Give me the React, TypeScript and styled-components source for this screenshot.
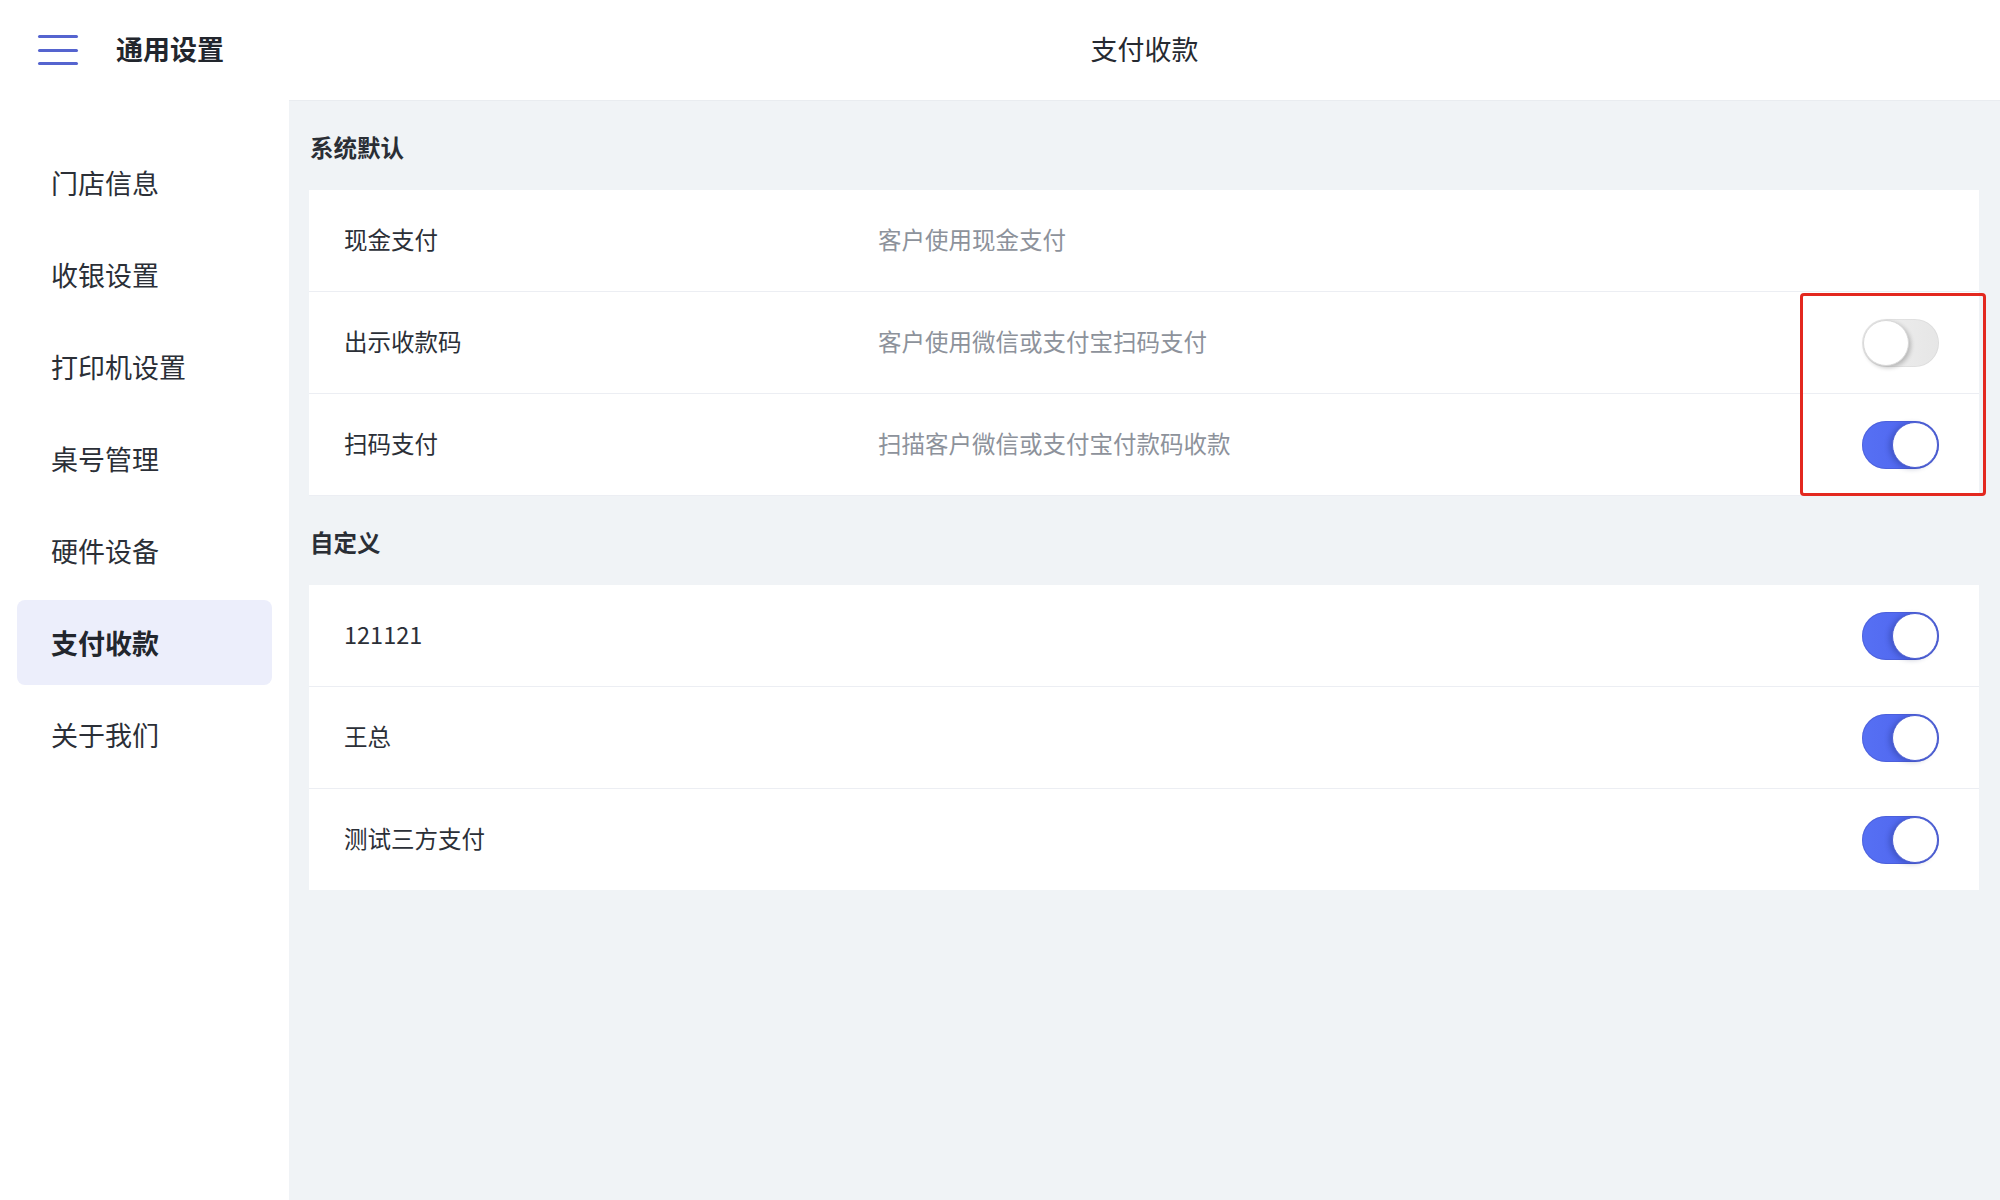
import React from "react";
import styled, { createGlobalStyle } from "styled-components";

const Global = createGlobalStyle`
  html, body { margin: 0; padding: 0; background: #ffffff; }
  body { font-family: "Noto Sans CJK SC", "Noto Sans", sans-serif; color: #2b2f37; }
  * { box-sizing: border-box; }
`;

const Page = styled.div`
  width: 2000px;
  height: 1200px;
  display: flex;
  flex-direction: column;
  overflow: hidden;
`;

const Header = styled.header`
  height: 100px;
  flex: none;
  display: flex;
  align-items: center;
  background: #ffffff;
`;

const Brand = styled.div`
  width: 289px;
  flex: none;
  display: flex;
  align-items: center;
  gap: 38px;
  padding-left: 38px;
`;

const MenuButton = styled.div`
  width: 40px;
  height: 30px;
  display: flex;
  flex-direction: column;
  justify-content: space-between;
`;

const MenuLine = styled.span`
  display: block;
  height: 3px;
  border-radius: 2px;
  background: #5564cf;
`;

const BrandTitle = styled.div`
  font-size: 27px;
  font-weight: 700;
  line-height: 36px;
  margin-top: -2px;
  color: #22262d;
`;

const PageTitle = styled.div`
  flex: 1;
  text-align: center;
  font-size: 27px;
  font-weight: 400;
  line-height: 36px;
  margin-top: -2px;
  color: #262a31;
`;

const Body = styled.div`
  flex: 1;
  display: flex;
  min-height: 0;
`;

const Sidebar = styled.nav`
  width: 289px;
  flex: none;
  background: #ffffff;
  padding: 40px 17px 0 17px;
  display: flex;
  flex-direction: column;
  gap: 7px;
`;

const NavItem = styled.div<{ $active?: boolean }>`
  height: 85px;
  display: flex;
  align-items: center;
  padding-left: 34px;
  border-radius: 8px;
  font-size: 27px;
  line-height: 34px;
  font-weight: ${(p) => (p.$active ? 700 : 400)};
  color: ${(p) => (p.$active ? "#22262d" : "#2b2f37")};
  background: ${(p) => (p.$active ? "#eceefb" : "transparent")};
`;

const Main = styled.main`
  flex: 1;
  background: #f0f3f6;
  border-top: 1px solid #e9ecf0;
  padding: 0 21px 0 20px;
`;

const SectionTitle = styled.div`
  padding: 31px 0 28px 1px;
  font-size: 23.5px;
  line-height: 30px;
  font-weight: 700;
  color: #2a2e35;
`;

const Card = styled.div`
  position: relative;
  background: #ffffff;
`;

const Row = styled.div`
  height: 102px;
  display: grid;
  grid-template-columns: 534px 1fr auto;
  align-items: center;
  padding: 0 40px 0 35px;
  border-bottom: 1px solid #eceef3;
  &:last-child {
    border-bottom: none;
    height: 101px;
  }
`;

const Label = styled.div`
  font-size: 23.5px;
  line-height: 30px;
  margin-top: -4px;
  color: #2b2f37;
`;

const Desc = styled.div`
  font-size: 23.5px;
  line-height: 30px;
  margin-top: -4px;
  color: #8d929b;
`;

const Track = styled.div<{ $on: boolean }>`
  width: 77px;
  height: 48px;
  border-radius: 24px;
  padding: 1px;
  display: flex;
  align-items: center;
  justify-content: ${(p) => (p.$on ? "flex-end" : "flex-start")};
  background: ${(p) =>
    p.$on
      ? "linear-gradient(90deg, #5670f4 0%, #5168ef 60%, #4b5fd8 100%)"
      : "linear-gradient(90deg, #f0f0f0 0%, #e6e6e6 100%)"};
  box-shadow: ${(p) =>
    p.$on ? "inset 0 0 0 1px rgba(70, 85, 200, 0.5)" : "inset 0 0 0 1px rgba(0,0,0,0.04)"};
`;

const Knob = styled.div<{ $on: boolean }>`
  width: 46px;
  height: 46px;
  border-radius: 50%;
  background: #ffffff;
  border: 1px solid ${(p) => (p.$on ? "#4c5ed2" : "#d8d8d8")};
  box-shadow: ${(p) =>
    p.$on ? "-3px 1px 5px rgba(20, 30, 90, 0.25)" : "2px 2px 4px rgba(0, 0, 0, 0.22)"};
`;

const Highlight = styled.div`
  position: absolute;
  right: -7px;
  top: 103px;
  width: 186px;
  height: 203px;
  border: 3px solid #e3281f;
  border-radius: 4px;
  pointer-events: none;
`;

const Toggle = ({ on }: { on: boolean }) => (
  <Track $on={on}>
    <Knob $on={on} />
  </Track>
);

const navItems = ["门店信息", "收银设置", "打印机设置", "桌号管理", "硬件设备", "支付收款", "关于我们"];

const systemRows: { label: string; desc: string; toggle?: boolean }[] = [
  { label: "现金支付", desc: "客户使用现金支付" },
  { label: "出示收款码", desc: "客户使用微信或支付宝扫码支付", toggle: false },
  { label: "扫码支付", desc: "扫描客户微信或支付宝付款码收款", toggle: true },
];

const customRows = ["121121", "王总", "测试三方支付"];

export default function App() {
  return (
    <Page>
      <Global />
      <Header>
        <Brand>
          <MenuButton>
            <MenuLine />
            <MenuLine />
            <MenuLine />
          </MenuButton>
          <BrandTitle>通用设置</BrandTitle>
        </Brand>
        <PageTitle>支付收款</PageTitle>
      </Header>
      <Body>
        <Sidebar>
          {navItems.map((n) => (
            <NavItem key={n} $active={n === "支付收款"}>
              {n}
            </NavItem>
          ))}
        </Sidebar>
        <Main>
          <SectionTitle>系统默认</SectionTitle>
          <Card>
            {systemRows.map((r) => (
              <Row key={r.label}>
                <Label>{r.label}</Label>
                <Desc>{r.desc}</Desc>
                {r.toggle === undefined ? <span /> : <Toggle on={r.toggle} />}
              </Row>
            ))}
            <Highlight />
          </Card>
          <SectionTitle>自定义</SectionTitle>
          <Card>
            {customRows.map((r) => (
              <Row key={r}>
                <Label>{r}</Label>
                <Desc />
                <Toggle on={true} />
              </Row>
            ))}
          </Card>
        </Main>
      </Body>
    </Page>
  );
}
